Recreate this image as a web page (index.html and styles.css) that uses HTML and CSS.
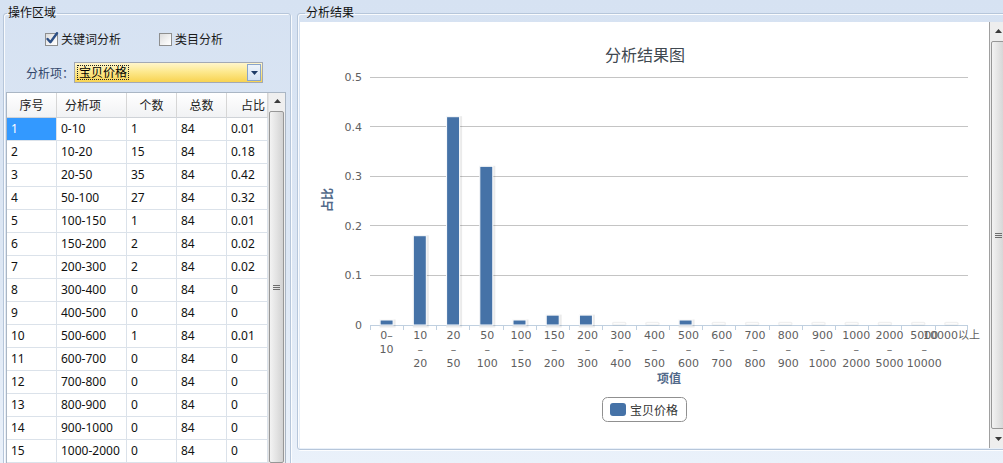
FILE: index.html
```html
<!DOCTYPE html>
<html lang="zh">
<head>
<meta charset="utf-8">
<title>分析</title>
<link rel="stylesheet" href="styles.css">
</head>
<body>
<div class="app">
  <fieldset class="group left">
    <legend>操作区域</legend>
    <div class="checks">
      <label class="check"><span class="box"><svg width="14" height="14" viewBox="0 0 14 14"><path d="M2.6 7 L5.4 10.2 L12 1.2" fill="none" stroke="#2c4f86" stroke-width="2.4" stroke-linecap="round" stroke-linejoin="round"/></svg></span>关键词分析</label>
      <label class="check second"><span class="box"></span>类目分析</label>
    </div>
    <div class="field">
      <span class="field-label">分析项：</span>
      <div class="combo">
        <span class="combo-text"><span class="focus">宝贝价格</span></span>
        <span class="combo-btn"><svg width="7" height="4" viewBox="0 0 7 4"><path d="M0 0 H7 L3.5 4 Z" fill="#1d3b66"/></svg></span>
      </div>
    </div>
    <div class="grid">
      <table>
        <colgroup><col class="w50"><col class="w70"><col class="w50"><col class="w50"><col class="w41"></colgroup>
        <thead>
          <tr><th class="c">序号</th><th class="l">分析项</th><th class="c">个数</th><th class="c">总数</th><th class="r">占比</th></tr>
        </thead>
        <tbody>
          <tr><td class="sel">1</td><td>0-10</td><td>1</td><td>84</td><td>0.01</td></tr>
          <tr><td>2</td><td>10-20</td><td>15</td><td>84</td><td>0.18</td></tr>
          <tr><td>3</td><td>20-50</td><td>35</td><td>84</td><td>0.42</td></tr>
          <tr><td>4</td><td>50-100</td><td>27</td><td>84</td><td>0.32</td></tr>
          <tr><td>5</td><td>100-150</td><td>1</td><td>84</td><td>0.01</td></tr>
          <tr><td>6</td><td>150-200</td><td>2</td><td>84</td><td>0.02</td></tr>
          <tr><td>7</td><td>200-300</td><td>2</td><td>84</td><td>0.02</td></tr>
          <tr><td>8</td><td>300-400</td><td>0</td><td>84</td><td>0</td></tr>
          <tr><td>9</td><td>400-500</td><td>0</td><td>84</td><td>0</td></tr>
          <tr><td>10</td><td>500-600</td><td>1</td><td>84</td><td>0.01</td></tr>
          <tr><td>11</td><td>600-700</td><td>0</td><td>84</td><td>0</td></tr>
          <tr><td>12</td><td>700-800</td><td>0</td><td>84</td><td>0</td></tr>
          <tr><td>13</td><td>800-900</td><td>0</td><td>84</td><td>0</td></tr>
          <tr><td>14</td><td>900-1000</td><td>0</td><td>84</td><td>0</td></tr>
          <tr><td>15</td><td>1000-2000</td><td>0</td><td>84</td><td>0</td></tr>
        </tbody>
      </table>
      <div class="vscroll small">
        <div class="sb-btn"><svg width="7" height="4" viewBox="0 0 7 4"><path d="M0 4 H7 L3.5 0 Z" fill="#3a3a3a"/></svg></div>
        <div class="sb-thumb"><span class="grip"></span></div>
      </div>
    </div>
  </fieldset>

  <fieldset class="group right">
    <legend>分析结果</legend>
    <div class="chart-wrap">
      <div class="chart">
        <svg width="689" height="426" viewBox="0 0 689 426">
          <text class="title" x="345" y="39" text-anchor="middle">分析结果图</text>
          <g class="gridlines">
            <line x1="70" y1="55.5" x2="668" y2="55.5"/>
            <line x1="70" y1="104.5" x2="668" y2="104.5"/>
            <line x1="70" y1="154.5" x2="668" y2="154.5"/>
            <line x1="70" y1="203.5" x2="668" y2="203.5"/>
            <line x1="70" y1="253.5" x2="668" y2="253.5"/>
          </g>
          <g class="ylab" text-anchor="end">
            <text x="62" y="59">0.5</text>
            <text x="62" y="108.6">0.4</text>
            <text x="62" y="158">0.3</text>
            <text x="62" y="207.6">0.2</text>
            <text x="62" y="257">0.1</text>
            <text x="62" y="307">0</text>
          </g>
          <text class="axis-title" transform="translate(32,178) rotate(-90)" text-anchor="middle">占比</text>
          <g class="axis">
            <line x1="70" y1="303.5" x2="668" y2="303.5"/>
            <line x1="70.5" y1="303" x2="70.5" y2="308"/>
            <line x1="103.5" y1="303" x2="103.5" y2="308"/>
            <line x1="136.5" y1="303" x2="136.5" y2="308"/>
            <line x1="169.5" y1="303" x2="169.5" y2="308"/>
            <line x1="203.5" y1="303" x2="203.5" y2="308"/>
            <line x1="236.5" y1="303" x2="236.5" y2="308"/>
            <line x1="269.5" y1="303" x2="269.5" y2="308"/>
            <line x1="302.5" y1="303" x2="302.5" y2="308"/>
            <line x1="336.5" y1="303" x2="336.5" y2="308"/>
            <line x1="369.5" y1="303" x2="369.5" y2="308"/>
            <line x1="402.5" y1="303" x2="402.5" y2="308"/>
            <line x1="435.5" y1="303" x2="435.5" y2="308"/>
            <line x1="469.5" y1="303" x2="469.5" y2="308"/>
            <line x1="502.5" y1="303" x2="502.5" y2="308"/>
            <line x1="535.5" y1="303" x2="535.5" y2="308"/>
            <line x1="568.5" y1="303" x2="568.5" y2="308"/>
            <line x1="601.5" y1="303" x2="601.5" y2="308"/>
            <line x1="635.5" y1="303" x2="635.5" y2="308"/>
            <line x1="667.5" y1="303" x2="667.5" y2="308"/>
          </g>
          <g class="ghosts">
            <rect x="312.7" y="300.5" width="13" height="2.5" rx="1"/>
            <rect x="345.9" y="300.5" width="13" height="2.5" rx="1"/>
            <rect x="412.3" y="300.5" width="13" height="2.5" rx="1"/>
            <rect x="445.6" y="300.5" width="13" height="2.5" rx="1"/>
            <rect x="478.8" y="300.5" width="13" height="2.5" rx="1"/>
            <rect x="512" y="300.5" width="13" height="2.5" rx="1"/>
            <rect x="545.2" y="300.5" width="13" height="2.5" rx="1"/>
            <rect x="578.4" y="300.5" width="13" height="2.5" rx="1"/>
            <rect x="611.7" y="300.5" width="13" height="2.5" rx="1"/>
            <rect x="644.9" y="300.5" width="13" height="2.5" rx="1"/>
          </g>
          <g class="shadows">
            <rect x="81.1" y="299" width="13" height="5"/>
            <rect x="114.3" y="214.7" width="13" height="89.3"/>
            <rect x="147.6" y="95.7" width="13" height="208.3"/>
            <rect x="180.8" y="145.3" width="13" height="158.7"/>
            <rect x="214" y="299" width="13" height="5"/>
            <rect x="247.2" y="294.1" width="13" height="9.9"/>
            <rect x="280.4" y="294.1" width="13" height="9.9"/>
            <rect x="380.1" y="299" width="13" height="5"/>
          </g>
          <g class="bars">
            <rect x="80.1" y="298" width="13" height="5"/>
            <rect x="113.3" y="213.7" width="13" height="89.3"/>
            <rect x="146.6" y="94.7" width="13" height="208.3"/>
            <rect x="179.8" y="144.3" width="13" height="158.7"/>
            <rect x="213" y="298" width="13" height="5"/>
            <rect x="246.2" y="293.1" width="13" height="9.9"/>
            <rect x="279.4" y="293.1" width="13" height="9.9"/>
            <rect x="379.1" y="298" width="13" height="5"/>
          </g>
          <g class="xlab" text-anchor="middle">
            <text x="86.6" y="317">0–<tspan x="86.6" dy="14">10</tspan></text>
            <text x="120.3" y="317">10<tspan x="120.3" dy="14">–</tspan><tspan x="120.3" dy="14">20</tspan></text>
            <text x="153.6" y="317">20<tspan x="153.6" dy="14">–</tspan><tspan x="153.6" dy="14">50</tspan></text>
            <text x="187.3" y="317">50<tspan x="187.3" dy="14">–</tspan><tspan x="187.3" dy="14">100</tspan></text>
            <text x="221" y="317">100<tspan x="221" dy="14">–</tspan><tspan x="221" dy="14">150</tspan></text>
            <text x="254.2" y="317">150<tspan x="254.2" dy="14">–</tspan><tspan x="254.2" dy="14">200</tspan></text>
            <text x="287.4" y="317">200<tspan x="287.4" dy="14">–</tspan><tspan x="287.4" dy="14">300</tspan></text>
            <text x="320.7" y="317">300<tspan x="320.7" dy="14">–</tspan><tspan x="320.7" dy="14">400</tspan></text>
            <text x="354.4" y="317">400<tspan x="354.4" dy="14">–</tspan><tspan x="354.4" dy="14">500</tspan></text>
            <text x="388.6" y="317">500<tspan x="388.6" dy="14">–</tspan><tspan x="388.6" dy="14">600</tspan></text>
            <text x="421.8" y="317">600<tspan x="421.8" dy="14">–</tspan><tspan x="421.8" dy="14">700</tspan></text>
            <text x="455.1" y="317">700<tspan x="455.1" dy="14">–</tspan><tspan x="455.1" dy="14">800</tspan></text>
            <text x="488.3" y="317">800<tspan x="488.3" dy="14">–</tspan><tspan x="488.3" dy="14">900</tspan></text>
            <text x="522.5" y="317">900<tspan x="522.5" dy="14">–</tspan><tspan x="522.5" dy="14">1000</tspan></text>
            <text x="556.2" y="317">1000<tspan x="556.2" dy="14">–</tspan><tspan x="556.2" dy="14">2000</tspan></text>
            <text x="589.4" y="317">2000<tspan x="589.4" dy="14">–</tspan><tspan x="589.4" dy="14">5000</tspan></text>
            <text x="624.2" y="317">5000<tspan x="624.2" dy="14">–</tspan><tspan x="624.2" dy="14">10000</tspan></text>
            <text x="651.4" y="317">10000以上</text>
          </g>
          <text class="axis-title" x="369" y="361" text-anchor="middle">项值</text>
          <g class="legend">
            <rect class="legend-box" x="302.5" y="375.5" width="84" height="24" rx="5"/>
            <rect class="legend-swatch" x="310" y="381" width="16" height="13" rx="3"/>
            <text class="legend-text" x="330" y="393">宝贝价格</text>
          </g>
        </svg>
      </div>
      <div class="vscroll big">
        <div class="sb-btn tall"><svg width="7" height="4" viewBox="0 0 7 4"><path d="M0 4 H7 L3.5 0 Z" fill="#3a3a3a"/></svg></div>
        <div class="sb-thumb"><span class="grip"></span></div>
        <div class="sb-btn tall"><svg width="7" height="4" viewBox="0 0 7 4"><path d="M0 0 H7 L3.5 4 Z" fill="#3a3a3a"/></svg></div>
      </div>
    </div>
  </fieldset>
</div>
</body>
</html>
```
FILE: styles.css
```css
html, body {
  margin: 0;
  height: 100%;
  overflow: hidden;
}
body {
  background: linear-gradient(#d6e2f2, #dde7f4 60%, #eaf1fa);
  font-family: "Noto Sans", "Noto Sans CJK SC", sans-serif;
  font-size: 12px;
  color: #1b1b1b;
}
.app {
  display: flex;
  align-items: flex-start;
  padding-top: 5px;
  height: 463px;
  box-sizing: border-box;
}
.group {
  margin: 0;
  border: 1px solid #b6c6da;
  border-radius: 3px;
  box-shadow: inset 1px 1px 0 rgba(255,255,255,0.85), 1px 1px 0 rgba(255,255,255,0.85);
  min-width: 0;
  box-sizing: border-box;
}
.group legend {
  padding: 0 1px;
  font-size: 12px;
  line-height: 16px;
  color: #111;
}
.left {
  margin-left: 3px;
  width: 288px;
  height: 480px;
  padding: 0;
  flex: none;
}
.left legend { margin-left: 3px; }
.right {
  margin-left: 6px;
  width: 712px;
  flex: none;
  padding: 1px 0 1px 2px;
}
.right legend { margin-left: 5px; }

/* checkboxes */
.checks {
  display: flex;
  align-items: center;
  height: 20px;
  margin: 8px 0 0 41px;
}
.check {
  display: flex;
  align-items: center;
  gap: 3px;
  color: #1a1a1a;
}
.check.second { margin-left: 38px; }
.box {
  width: 13px;
  height: 13px;
  box-sizing: border-box;
  border: 1px solid #8e8f8f;
  background: linear-gradient(135deg, #dcdcdc, #f7f7f7 70%, #ffffff);
  position: relative;
  display: block;
}
.box svg {
  position: absolute;
  left: -1px;
  top: -2px;
}

/* combo */
.field {
  display: flex;
  align-items: center;
  height: 21px;
  margin: 13px 0 0 22px;
}
.field-label {
  width: 48px;
  color: #33476a;
}
.combo {
  width: 189px;
  height: 21px;
  box-sizing: border-box;
  border: 1px solid #a3a9b4;
  display: flex;
  align-items: center;
  background: linear-gradient(#fff6cc, #fde98f 45%, #f8d351);
}
.combo-text {
  flex: 1;
  padding-left: 2px;
  display: flex;
  align-items: center;
}
.focus {
  border: 1px dotted #222;
  line-height: 13px;
  padding: 0 1px;
  color: #000;
}
.combo-btn {
  width: 14px;
  height: 17px;
  margin-right: 1px;
  box-sizing: border-box;
  border: 1px solid #89a5cb;
  background: linear-gradient(#eef4fb, #d3e2f3);
  display: flex;
  align-items: center;
  justify-content: center;
}

/* grid */
.grid {
  display: flex;
  margin: 9px 0 0 2px;
  width: 280px;
  height: 373px;
  box-sizing: border-box;
  border: 1px solid #aab6c4;
  background: #fff;
  overflow: hidden;
}
table {
  border-collapse: separate;
  border-spacing: 0;
  table-layout: fixed;
  width: 261px;
  flex: none;
  align-self: flex-start;
}
.w50 { width: 50px; }
.w70 { width: 70px; }
.w41 { width: 41px; }
th {
  font-weight: normal;
  line-height: 23px;
  padding: 1px 0 0;
  border-right: 1px solid #d6d6d6;
  border-bottom: 1px solid #cfd3d8;
  background: linear-gradient(#ffffff, #f1f2f4);
  color: #222;
  white-space: nowrap;
}
th.c { text-align: center; }
th.l { text-align: left; padding-left: 8px; }
th.r { text-align: left; padding-left: 14px; }
td {
  padding: 0 0 0 4px;
  line-height: 22px;
  border-right: 1px solid #dbe2ea;
  border-bottom: 1px solid #dbe2ea;
  white-space: nowrap;
  overflow: hidden;
  color: #111;
}
td.sel {
  background: #3399ff;
  color: #fff;
}

/* scrollbars */
.vscroll {
  width: 17px;
  flex: none;
  display: flex;
  flex-direction: column;
  background: #efefef;
  box-sizing: border-box;
}
.vscroll.small {
  border-left: 1px solid #e2e2e2;
  padding-bottom: 1px;
}
.vscroll.big {
  height: 426px;
  border-left: 1px solid #a0a0a0;
  background: #eeeeee;
}
.sb-btn {
  height: 16px;
  flex: none;
  display: flex;
  align-items: center;
  justify-content: center;
}
.sb-btn.tall { height: 18px; }
.sb-thumb {
  flex: 1;
  margin: 2px 1px 0 0;
  border: 1px solid #979797;
  border-radius: 2px;
  background: linear-gradient(to right, #f3f3f3, #e3e3e3 50%, #d2d2d2);
  display: flex;
  align-items: center;
  justify-content: center;
}
.vscroll.big .sb-thumb { margin: 1px 0 1px 1px; }
.grip {
  width: 7px;
  height: 5px;
  background: repeating-linear-gradient(#6e6e6e 0 1px, transparent 1px 2px);
}

/* chart */
.chart-wrap {
  display: flex;
}
.chart {
  width: 689px;
  height: 426px;
  background: #fff;
  flex: none;
}
.chart svg { display: block; }
.title {
  font-family: "Noto Sans CJK SC", sans-serif;
  font-size: 16px;
  fill: #404850;
}
.gridlines line {
  stroke: #c4c4c4;
  stroke-width: 1;
}
.axis line {
  stroke: #c0d0e0;
  stroke-width: 1;
}
.ylab text, .xlab text {
  font-family: "DejaVu Sans", "Noto Sans CJK SC", sans-serif;
  font-size: 11px;
  fill: #606060;
}
.axis-title {
  font-family: "Noto Sans CJK SC", sans-serif;
  font-size: 12px;
  font-weight: bold;
  fill: #52698a;
}
.bars rect {
  fill: #4572a7;
  stroke: #ffffff;
  stroke-width: 1;
}
.shadows rect {
  fill: none;
  stroke: #000;
  stroke-opacity: 0.08;
  stroke-width: 3;
}
.ghosts rect {
  fill: none;
  stroke: #000;
  stroke-opacity: 0.06;
  stroke-width: 1.5;
}
.legend-box {
  fill: #fff;
  stroke: #909090;
  stroke-width: 1;
}
.legend-swatch { fill: #4572a7; }
.legend-text {
  font-family: "Noto Sans CJK SC", sans-serif;
  font-size: 12px;
  fill: #333;
}
```
